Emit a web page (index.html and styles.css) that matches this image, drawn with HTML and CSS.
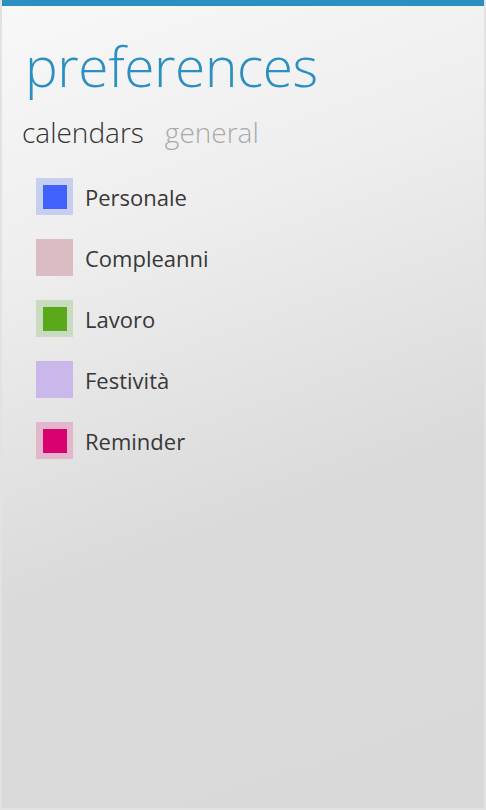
FILE: index.html
```html
<!DOCTYPE html>
<html lang="it">
<head>
    <meta charset="UTF-8">
    <meta name="viewport" content="width=device-width, initial-scale=1.0">
    <title>Preferences</title>
    <link rel="stylesheet" href="styles.css">
</head>
<body>
    <div class="screen">
        <div class="topbar"></div>

        <h1 class="title">preferences</h1>

        <div class="tabs">
            <span class="tab active">calendars</span>
            <span class="tab">general</span>
        </div>

        <ul class="calendars">
            <li class="calendar">
                <span class="swatch personale"><span class="fill"></span></span>
                <span class="name">Personale</span>
            </li>
            <li class="calendar">
                <span class="swatch compleanni"></span>
                <span class="name">Compleanni</span>
            </li>
            <li class="calendar">
                <span class="swatch lavoro"><span class="fill"></span></span>
                <span class="name">Lavoro</span>
            </li>
            <li class="calendar">
                <span class="swatch festivita"></span>
                <span class="name">Festività</span>
            </li>
            <li class="calendar">
                <span class="swatch reminder"><span class="fill"></span></span>
                <span class="name">Reminder</span>
            </li>
        </ul>
    </div>
</body>
</html>
```

FILE: styles.css
```css
html, body {
    margin: 0;
    padding: 0;
}
body {
    font-family: "Open Sans", "Noto Sans", sans-serif;
    background: #d9d9d9;
}
.screen {
    width: 486px;
    height: 810px;
    box-sizing: border-box;
    border: 2px solid #e2e2e2;
    border-top: none;
    background: linear-gradient(160deg, #f8f8f8 0%, #eeeeee 28%, #dadada 62%, #d9d9d9 100%);
    overflow: hidden;
}
.topbar {
    height: 6px;
    margin: 0 -2px;
    background: #2b8fc1;
}
.title {
    margin: 28px 0 0 23px;
    font-size: 55px;
    font-weight: 300;
    line-height: 64px;
    color: #2b8fc1;
    letter-spacing: -0.4px;
}
.tabs {
    display: flex;
    gap: 21px;
    margin: 16px 0 0 20px;
}
.tab {
    font-size: 28px;
    font-weight: 300;
    line-height: 36px;
    color: #aaaaaa;
}
.tab.active {
    color: #333333;
}
.calendars {
    list-style: none;
    margin: 28px 0 0 34px;
    padding: 0;
    display: flex;
    flex-direction: column;
    gap: 24px;
}
.calendar {
    display: flex;
    align-items: center;
    gap: 12px;
    height: 37px;
}
.swatch {
    width: 37px;
    height: 37px;
    display: flex;
    align-items: center;
    justify-content: center;
}
.fill {
    width: 24px;
    height: 24px;
}
.name {
    font-size: 22px;
    color: #383838;
}
.personale { background: #c6cff0; }
.personale .fill { background: #4062fb; }
.compleanni { background: #dcbcc3; }
.lavoro { background: #c9dcc0; }
.lavoro .fill { background: #5aa91b; }
.festivita { background: #cbb8ea; }
.reminder { background: #e3b6cb; }
.reminder .fill { background: #d9006f; }
```
